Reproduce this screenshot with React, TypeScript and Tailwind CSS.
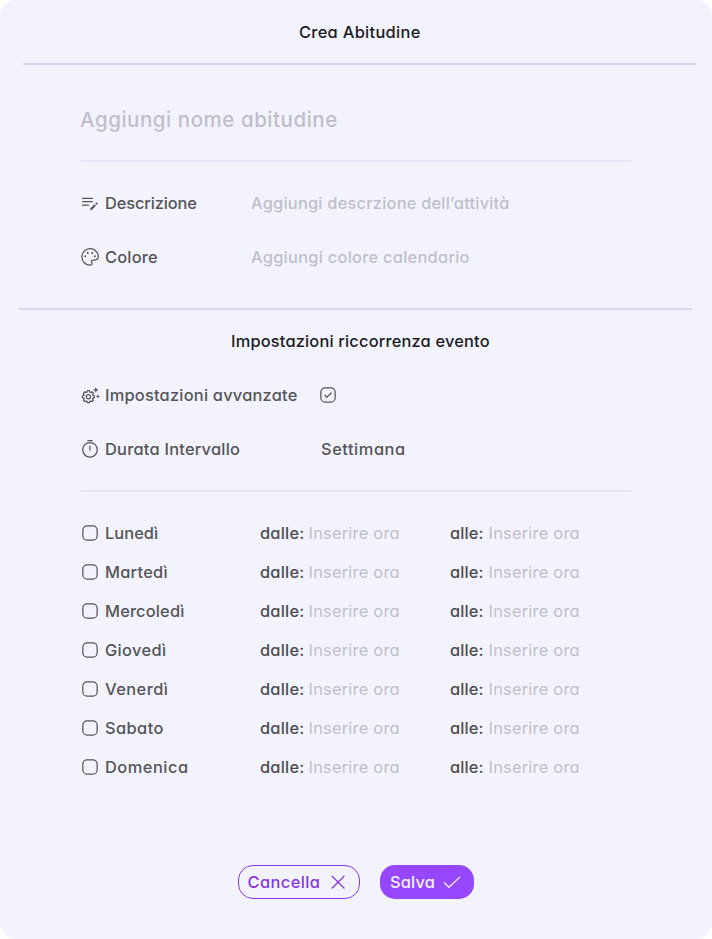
import type { ReactNode } from "react";

const days = [
  { name: "Lunedì", tracking: "tracking-[0.05px]" },
  { name: "Martedì", tracking: "tracking-[0.26px]" },
  { name: "Mercoledì", tracking: "tracking-[0.17px]" },
  { name: "Giovedì", tracking: "tracking-[0.36px]" },
  { name: "Venerdì", tracking: "tracking-[0.46px]" },
  { name: "Sabato", tracking: "tracking-[0.42px]" },
  { name: "Domenica", tracking: "tracking-[0.52px]" },
];

function Icon({ children }: { children: ReactNode }) {
  return (
    <svg
      width="20"
      height="20"
      viewBox="0 0 20 20"
      fill="none"
      stroke="currentColor"
      strokeWidth="1.25"
      strokeLinecap="round"
      strokeLinejoin="round"
      className="block shrink-0"
    >
      {children}
    </svg>
  );
}

function DescriptionIcon() {
  return (
    <Icon>
      <path d="M2.6 5.3h9.8M2.6 8.7h9.8M2.6 12.2h5.8" strokeWidth="1.25" />
      <path d="M11.2 16.1l4-4" strokeWidth="2.1" strokeLinecap="butt" />
      <path d="M10.4 16.9l.3-1.6 1.3 1.3z" fill="currentColor" strokeWidth="0.3" />
      <path d="M16 11.3l1.2-1.2" strokeWidth="2.1" strokeLinecap="butt" />
    </Icon>
  );
}

function PaletteIcon() {
  return (
    <Icon>
      <path d="M10.1 18.1A8.2 8.2 0 0 1 10 1.7a8.2 8 0 0 1 8.3 7.9c0 2.2-1.5 3.4-3.5 3.4h-1.5c-1.5 0-2.2 1-1.6 2.2.8 1.6.1 2.9-1.6 2.9z" />
      <g fill="currentColor" stroke="none">
        <circle cx="5.1" cy="9.3" r="1" />
        <circle cx="7.8" cy="6.1" r="1" />
        <circle cx="12.1" cy="6.1" r="1" />
        <circle cx="14.9" cy="9.3" r="1" />
      </g>
    </Icon>
  );
}

const gearPoints = Array.from({ length: 8 }, (_, tooth) =>
  [
    [-0.29, 4.8],
    [-0.16, 6.1],
    [0.16, 6.1],
    [0.29, 4.8],
  ].map(([offset, radius]) => {
    const angle = (tooth * Math.PI) / 4 + offset;
    return `${(8.4 + radius * Math.sin(angle)).toFixed(2)},${(11.7 - radius * Math.cos(angle)).toFixed(2)}`;
  }),
)
  .flat()
  .join(" ");

function AdvancedIcon() {
  return (
    <Icon>
      <polygon points={gearPoints} />
      <circle cx="8.4" cy="11.7" r="2.1" />
      <g fill="currentColor" stroke="none">
        <path d="M15.8 1.9l.8 2.2 2.2.8-2.2.8-.8 2.2-.8-2.2-2.2-.8 2.2-.8z" />
        <path d="M17.9 9.3l.6 1.5 1.5.6-1.5.6-.6 1.5-.6-1.5-1.5-.6 1.5-.6z" />
      </g>
    </Icon>
  );
}

function StopwatchIcon() {
  return (
    <Icon>
      <circle cx="10" cy="10.8" r="7.3" />
      <path d="M7.9 1.7h4.2M10 7.2v3.9" />
    </Icon>
  );
}

function CheckboxIcon({ checked = false }: { checked?: boolean }) {
  return (
    <Icon>
      <rect x="2.85" y="2.85" width="14.3" height="14.3" rx="4.2" />
      {checked && <path d="M6.8 10.1l2 2.1 4.3-4.2" />}
    </Icon>
  );
}

function Row({ icon, label, tracking, labelWidth, children }: {
  icon: ReactNode;
  label: string;
  tracking: string;
  labelWidth: string;
  children?: ReactNode;
}) {
  return (
    <div className="flex h-6 items-center">
      {icon}
      <span className={`ml-[5px] shrink-0 ${labelWidth} ${tracking}`}>{label}</span>
      {children}
    </div>
  );
}

export default function App() {
  return (
    <div className="h-[939px] w-[712px] bg-white">
      <main className="flex h-full flex-col rounded-2xl bg-[#f3f3fe] pt-5 font-['Inter',sans-serif] text-[16.4px] leading-6 font-[450] whitespace-nowrap text-[#555557] [font-feature-settings:'cv11']">
        <h1 className="ml-[299px] tracking-[0.31px] text-[#1c1c1e]">Crea Abitudine</h1>
        <hr className="mt-[19px] mr-4 ml-[23px] h-0.5 border-0 bg-[#dad6ee]" />

        <section className="mr-20 ml-20 flex flex-col">
          <p className="mt-10 h-[30px] text-[20.5px] leading-[30px] tracking-[0.54px] text-[#bfbfc9]">
            Aggiungi nome abitudine
          </p>
          <hr className="mt-[25px] h-0.5 rounded-full border-0 bg-[#e6e5f6]" />
          <div className="mt-[29px] flex flex-col gap-[30px]">
            <Row icon={<DescriptionIcon />} label="Descrizione" tracking="tracking-[-0.12px]" labelWidth="w-[146px]">
              <span className="tracking-[0.22px] text-[#bfbfc9]">Aggiungi descrzione dell’attività</span>
            </Row>
            <Row icon={<PaletteIcon />} label="Colore" tracking="tracking-[0.2px]" labelWidth="w-[146px]">
              <span className="tracking-[0.27px] text-[#bfbfc9]">Aggiungi colore calendario</span>
            </Row>
          </div>
        </section>

        <hr className="mt-[39px] mr-5 ml-[19px] h-0.5 border-0 bg-[#dad6ee]" />
        <h2 className="mt-[19px] ml-[231px] tracking-[0.18px] text-[#1c1c1e]">Impostazioni riccorrenza evento</h2>

        <section className="mr-20 ml-20 flex flex-col">
          <div className="mt-[30px] flex flex-col gap-[30px]">
            <Row icon={<AdvancedIcon />} label="Impostazioni avvanzate" tracking="tracking-[0.22px]" labelWidth="w-[213px]">
              <CheckboxIcon checked />
            </Row>
            <Row icon={<StopwatchIcon />} label="Durata Intervallo" tracking="tracking-[0.24px]" labelWidth="w-[216px]">
              <span className="tracking-[0.55px]">Settimana</span>
            </Row>
          </div>
          <hr className="mt-[29px] h-0.5 rounded-full border-0 bg-[#e6e5f6]" />
          <div className="mt-[29px] flex flex-col gap-[15px]">
            {days.map((day) => (
              <Row key={day.name} icon={<CheckboxIcon />} label={day.name} tracking={day.tracking} labelWidth="w-[155px]">
                <span className="w-[48.5px] tracking-[0.22px] text-[#4d4d4f]">dalle:</span>
                <span className="w-[141.5px] font-normal tracking-[0.23px] text-[#bfbfc9]">Inserire ora</span>
                <span className="w-[38.5px] tracking-[0.15px] text-[#4d4d4f]">alle:</span>
                <span className="font-normal tracking-[0.23px] text-[#bfbfc9]">Inserire ora</span>
              </Row>
            ))}
          </div>
        </section>

        <div className="mt-[86px] ml-[238px] flex gap-5">
          <button className="flex h-[34px] w-[122px] items-center rounded-[15px] border border-[#8638e5] pl-[8.5px] text-left text-[#8638e5]">
            <span className="w-[80.5px] tracking-[0.42px]">Cancella</span>
            <Icon>
              <path d="M4.2 4.2l11.8 11.8M16 4.2L4.2 16" />
            </Icon>
          </button>
          <button className="flex h-[34px] w-[94px] items-center rounded-[15px] bg-[#9747ff] pl-2.5 text-left text-[#f3f3fe]">
            <span className="w-[52px] tracking-[0.2px]">Salva</span>
            <Icon>
              <path d="M2.3 10.8l4.7 4.5L17.7 5.1" />
            </Icon>
          </button>
        </div>
      </main>
    </div>
  );
}
